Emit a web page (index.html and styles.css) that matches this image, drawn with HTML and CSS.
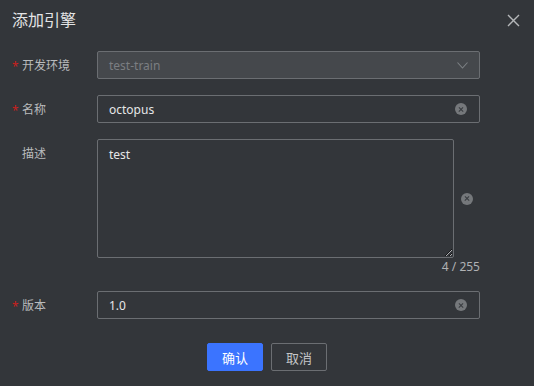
FILE: index.html
```html
<!DOCTYPE html>
<html lang="zh-CN">
<head>
    <meta charset="UTF-8">
    <meta name="viewport" content="width=device-width, initial-scale=1.0">
    <title>添加引擎</title>
    <link rel="stylesheet" href="styles.css">
</head>
<body>
    <div class="dialog">
        <div class="dialog-header">
            <span class="dialog-title">添加引擎</span>
            <button class="close-btn" aria-label="close">
                <svg width="13" height="13" viewBox="0 0 13 13"><path d="M1 1L12 12M12 1L1 12" stroke="#b5b7b9" stroke-width="1.4" fill="none"/></svg>
            </button>
        </div>

        <div class="dialog-body">
            <div class="form-item">
                <label class="form-label required">开发环境</label>
                <div class="form-control">
                    <div class="input-box is-disabled">
                        <span class="input-text">test-train</span>
                        <svg class="arrow" width="11" height="7" viewBox="0 0 11 7"><path d="M0.5 0.5L5.5 6L10.5 0.5" stroke="#7d8084" stroke-width="1.1" fill="none"/></svg>
                    </div>
                </div>
            </div>

            <div class="form-item">
                <label class="form-label required">名称</label>
                <div class="form-control">
                    <div class="input-box">
                        <span class="input-text value">octopus</span>
                        <span class="clear-icon"></span>
                    </div>
                </div>
            </div>

            <div class="form-item">
                <label class="form-label">描述</label>
                <div class="form-control">
                    <div class="textarea-wrap">
                        <textarea class="textarea">test</textarea>
                        <span class="clear-icon"></span>
                    </div>
                    <div class="word-count">4 / 255</div>
                </div>
            </div>

            <div class="form-item">
                <label class="form-label required">版本</label>
                <div class="form-control">
                    <div class="input-box">
                        <span class="input-text value">1.0</span>
                        <span class="clear-icon"></span>
                    </div>
                </div>
            </div>
        </div>

        <div class="dialog-footer">
            <button class="btn btn-primary">确认</button>
            <button class="btn">取消</button>
        </div>
    </div>
</body>
</html>
```

FILE: styles.css
```css
* {
    box-sizing: border-box;
    padding: 0;
    margin: 0;
}

body {
    font-family: "Noto Sans", "Noto Sans CJK SC", sans-serif;
    background-color: #33363a;
    width: 534px;
    height: 386px;
    overflow: hidden;
}

.dialog {
    width: 534px;
}

.dialog-header {
    height: 40px;
    padding: 0 14px 0 12px;
    display: flex;
    align-items: center;
    justify-content: space-between;
}

.dialog-title {
    font-size: 16px;
    color: #e3e4e5;
    line-height: 20px;
}

.close-btn {
    background: none;
    border: none;
    width: 13px;
    height: 13px;
    display: flex;
    cursor: pointer;
}

.dialog-body {
    padding: 11px 54px 0 12px;
}

.form-item {
    display: flex;
    align-items: flex-start;
    margin-bottom: 16px;
}

.form-label {
    width: 85px;
    flex-shrink: 0;
    padding-left: 10px;
    padding-top: 2px;
    font-size: 12px;
    line-height: 26px;
    color: #b9bbbd;
    position: relative;
}

.form-label.required::before {
    content: "*";
    position: absolute;
    left: 0;
    top: 3px;
    color: #c9211e;
    font-size: 12px;
}

.form-control {
    flex: 1;
}

.input-box {
    height: 28px;
    border: 1px solid #6b6e72;
    border-radius: 2px;
    display: flex;
    align-items: center;
    justify-content: space-between;
    padding: 0 11px 0 11px;
}

.input-box.is-disabled {
    background-color: #45484c;
}

.input-text {
    font-size: 12px;
    color: #7b7e82;
}

.input-text.value {
    color: #e6e7e8;
}

.clear-icon {
    width: 12px;
    height: 12px;
    border-radius: 50%;
    background-color: #75787b;
    position: relative;
    margin-right: 1px;
}

.clear-icon::before,
.clear-icon::after {
    content: "";
    position: absolute;
    left: 3px;
    top: 5.5px;
    width: 6px;
    height: 1.2px;
    background-color: #3a3d41;
    transform: rotate(45deg);
}

.clear-icon::after {
    transform: rotate(-45deg);
}

.textarea-wrap {
    display: flex;
    align-items: center;
}

.textarea {
    width: 357px;
    height: 119px;
    background-color: transparent;
    border: 1px solid #6b6e72;
    border-radius: 2px;
    padding: 6px 11px;
    font-family: "Noto Sans", "Noto Sans CJK SC", sans-serif;
    font-size: 12px;
    color: #e6e7e8;
    color-scheme: dark;
    outline: none;
}

.textarea-wrap .clear-icon {
    margin-left: 7px;
}

.word-count {
    text-align: right;
    font-size: 12px;
    line-height: 17px;
    color: #b0b2b4;
}

.dialog-footer {
    padding-top: 8px;
    display: flex;
    justify-content: center;
    gap: 8px;
}

.btn {
    height: 28px;
    width: 56px;
    border: 1px solid #6b6e72;
    border-radius: 2px;
    background: transparent;
    color: #c4c6c8;
    font-family: "Noto Sans", "Noto Sans CJK SC", sans-serif;
    font-size: 13px;
    cursor: pointer;
}

.btn-primary {
    background-color: #3b74ff;
    border-color: #3b74ff;
    color: #ffffff;
}
```
